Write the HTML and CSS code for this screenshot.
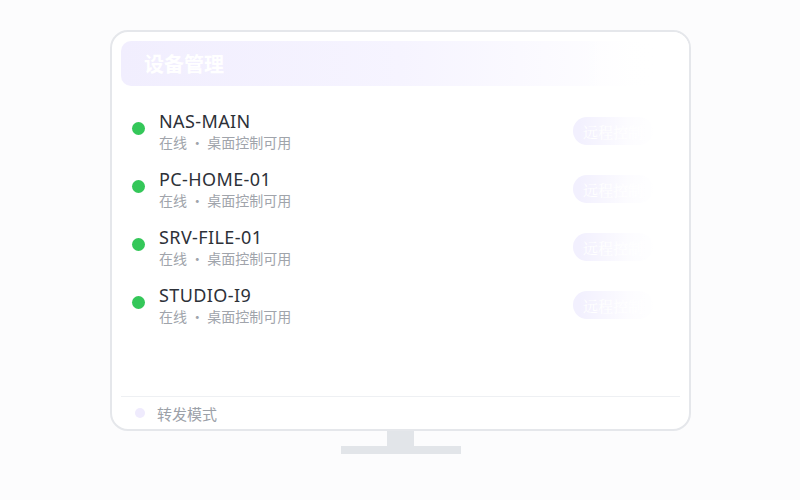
FILE: index.html
```html
<!DOCTYPE html>
<html lang="zh-CN">
<head>
<meta charset="utf-8">
<link rel="stylesheet" href="styles.css">
</head>
<body>
<div class="monitor">
  <div class="screen">
    <div class="header"><span class="title">设备管理</span></div>
    <ul class="list">
      <li class="row">
        <span class="dot"></span>
        <div class="info"><div class="name">NAS-MAIN</div><div class="sub">在线 · 桌面控制可用</div></div>
        <button class="btn">远程控制</button>
      </li>
      <li class="row">
        <span class="dot"></span>
        <div class="info"><div class="name">PC-HOME-01</div><div class="sub">在线 · 桌面控制可用</div></div>
        <button class="btn">远程控制</button>
      </li>
      <li class="row">
        <span class="dot"></span>
        <div class="info"><div class="name">SRV-FILE-01</div><div class="sub">在线 · 桌面控制可用</div></div>
        <button class="btn">远程控制</button>
      </li>
      <li class="row">
        <span class="dot"></span>
        <div class="info"><div class="name">STUDIO-I9</div><div class="sub">在线 · 桌面控制可用</div></div>
        <button class="btn">远程控制</button>
      </li>
    </ul>
    <div class="footer"><span class="fdot"></span><span class="ftext">转发模式</span></div>
    <div class="fade"></div>
  </div>
  <div class="neck"></div>
  <div class="base"></div>
</div>
</body>
</html>
```

FILE: styles.css
```css
html, body {
  margin: 0;
  padding: 0;
  background: #fcfcfd;
  font-family: "Noto Sans", "Noto Sans CJK SC", sans-serif;
}
.monitor {
  width: 581px;
  margin: 30px 0 0 110px;
  display: flex;
  flex-direction: column;
  align-items: center;
}
.screen {
  position: relative;
  width: 581px;
  height: 401px;
  box-sizing: border-box;
  border: 2px solid #e5e7eb;
  border-radius: 18px;
  background: #fff;
  padding: 9px 9px 0 9px;
  display: flex;
  flex-direction: column;
  overflow: hidden;
}
.header {
  height: 45px;
  border-radius: 10px;
  background: linear-gradient(to right, #f1eefe 0%, #f6f4ff 50%, #ffffff 97%);
  display: flex;
  align-items: center;
  padding-left: 23px;
}
.title {
  color: #fff;
  font-size: 20px;
  font-weight: 700;
  font-family: "Noto Sans CJK SC", sans-serif;
}
.list {
  list-style: none;
  margin: 0;
  padding: 24px 0 0 11px;
  flex: 1;
  display: flex;
  flex-direction: column;
  gap: 16px;
}
.row {
  display: flex;
  align-items: flex-start;
}
.dot {
  width: 13px;
  height: 13px;
  border-radius: 50%;
  background: #34c759;
  margin-top: 12px;
  flex: none;
}
.info {
  margin-left: 14px;
  flex: 1;
  display: flex;
  flex-direction: column;
  gap: 1px;
}
.name {
  font-size: 18px;
  line-height: 22px;
  letter-spacing: 0.4px;
  color: #2d3138;
  font-weight: 400;
}
.sub {
  font-size: 14px;
  line-height: 19px;
  color: #a0a4ab;
  font-family: "Noto Sans CJK SC", sans-serif;
}
.btn {
  margin-top: 7px;
  margin-right: 27px;
  height: 28px;
  width: 80px;
  border: none;
  border-radius: 14px;
  background: #f2f0fe;
  color: #fff;
  font-size: 15px;
  font-family: "Noto Serif CJK SC", "Noto Sans CJK SC", serif;
  padding: 0 10px;
  text-align: left;
}
.footer {
  height: 32px;
  border-top: 1px solid #eef0f3;
  display: flex;
  align-items: center;
  padding-left: 14px;
}
.fdot {
  width: 10px;
  height: 10px;
  border-radius: 50%;
  background: #efebfd;
}
.ftext {
  margin-left: 12px;
  font-size: 15px;
  color: #9ca1a8;
  font-family: "Noto Sans CJK SC", sans-serif;
}
.fade {
  position: absolute;
  top: 0;
  bottom: 40px;
  right: 0;
  width: 110px;
  background: linear-gradient(to right, rgba(255,255,255,0) 0%, rgba(255,255,255,0.8) 45%, #fff 70%);
  pointer-events: none;
}
.neck {
  width: 27px;
  height: 15px;
  background: #e2e5e9;
}
.base {
  width: 120px;
  height: 8px;
  background: #e2e5e9;
}
```
